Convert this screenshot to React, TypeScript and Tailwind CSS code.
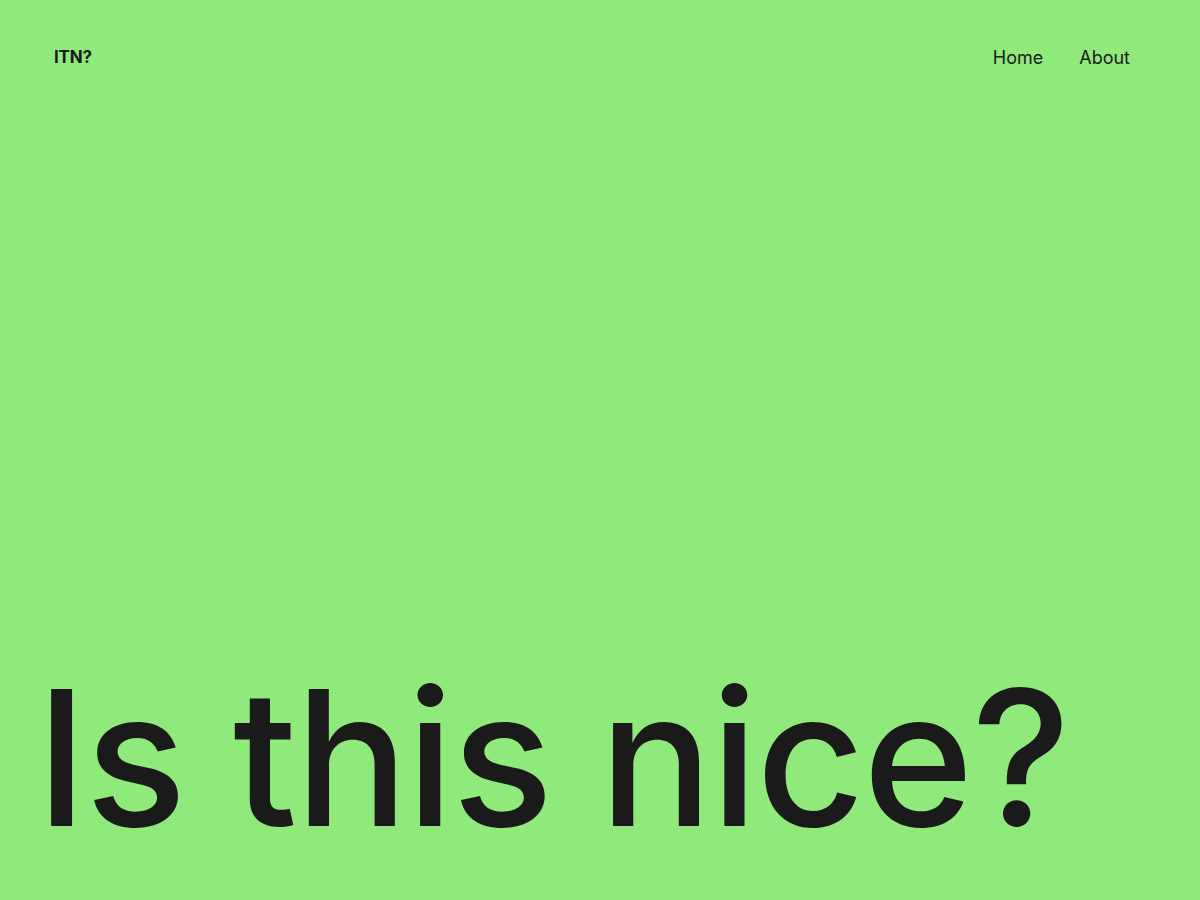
export default function App() {
  return (
    <div className="h-[900px] w-full overflow-hidden bg-[#90ea7b] text-[#1a1a1a] flex flex-col justify-between font-['Inter',sans-serif]">
      <header className="flex items-center justify-between pl-[54px] pr-[70px] pt-[44px]">
        <a className="text-[17px] font-bold tracking-[-0.01em]">ITN?</a>
        <nav className="flex gap-[36px] text-[18px]">
          <a>Home</a>
          <a>About</a>
        </nav>
      </header>
      <h1 className="pl-[36px] pb-[48px] text-[188px] leading-none font-medium tracking-[-0.01em] whitespace-nowrap">
        Is this nice?
      </h1>
    </div>
  );
}
